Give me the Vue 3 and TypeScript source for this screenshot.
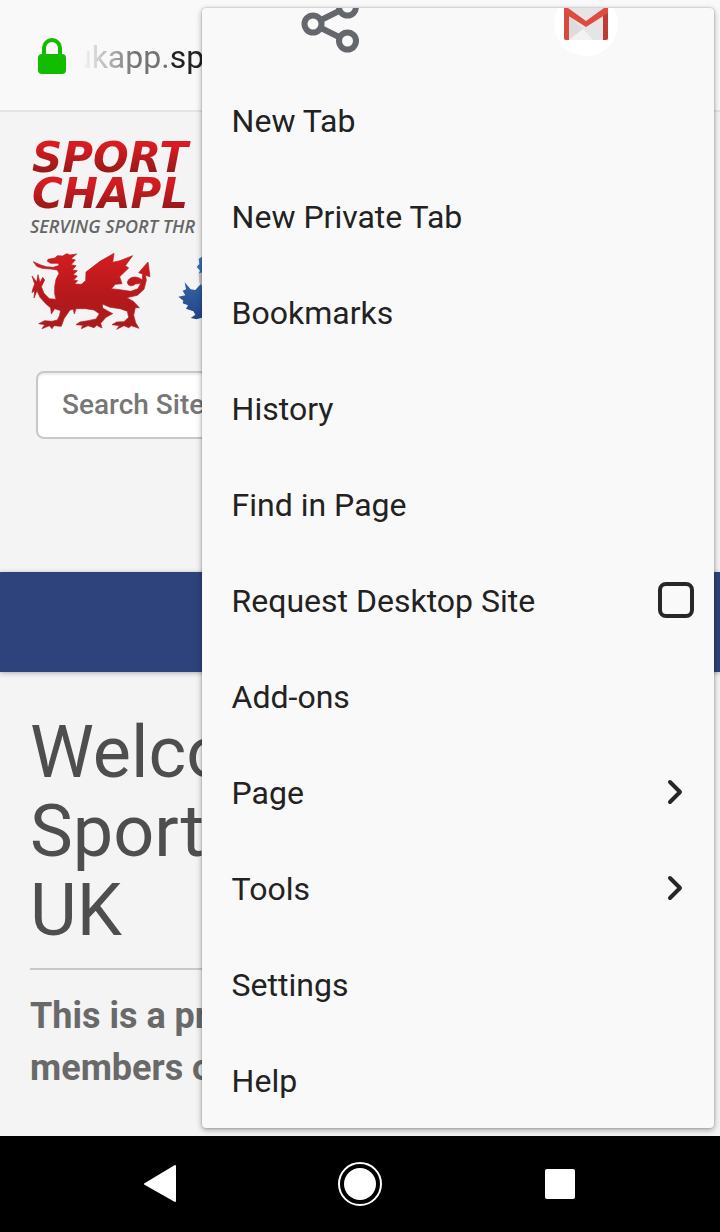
<script setup lang="ts">
import { ref } from 'vue'

interface MenuItem {
  label: string
  submenu?: boolean
  checkable?: boolean
}

const items: MenuItem[] = [
  { label: 'New Tab' },
  { label: 'New Private Tab' },
  { label: 'Bookmarks' },
  { label: 'History' },
  { label: 'Find in Page' },
  { label: 'Request Desktop Site', checkable: true },
  { label: 'Add-ons' },
  { label: 'Page', submenu: true },
  { label: 'Tools', submenu: true },
  { label: 'Settings' },
  { label: 'Help' },
]

const desktopSite = ref(false)
const query = ref('')
</script>

<template>
  <div class="screen">
    <div class="browser">
      <header class="address-bar">
        <svg class="lock" viewBox="0 0 28 36" aria-hidden="true">
          <path d="M6 18V10a8 8 0 0 1 16 0v8" fill="none" stroke="#12bc00" stroke-width="4" />
          <rect y="16" width="28" height="20" rx="4" fill="#12bc00" />
        </svg>
        <div class="url">ukapp.<span class="domain">sp</span></div>
      </header>

      <main class="page">
        <div class="brand">
          <div class="wordmark"><span>SPORT</span><span>CHAPL</span></div>
          <div class="tagline">SERVING SPORT THR</div>
          <svg class="emblems" viewBox="30 30 540 246" aria-hidden="true">
            <defs>
              <linearGradient id="dragonRed" x1="0" y1="0" x2="0" y2="1">
                <stop offset="0" stop-color="#d41c20" />
                <stop offset="0.6" stop-color="#b3191b" />
                <stop offset="1" stop-color="#a81c1c" />
              </linearGradient>
              <linearGradient id="thistleBlue" x1="0" y1="0" x2="0" y2="1">
                <stop offset="0" stop-color="#3d7ab8" />
                <stop offset="1" stop-color="#24458a" />
              </linearGradient>
            </defs>
            <path
              fill="url(#dragonRed)"
              stroke="#b81a1c"
              stroke-width="2"
              stroke-linejoin="round"
              d="M170 42 L150 45 L140 41 L128 48 L112 47 L105 54 L84 58 L82 64 L92 70 L114 70 L118 76 L100 82 L78 80 L60 74 L40 65 L50 79 L66 85 L92 87 L112 90 L117 100 L108 118 L104 140 L104 162 L108 178 L88 176 L72 160 L64 140 L74 120 L68 112 L60 128 L54 104 L50 126 L36 108 L44 132 L38 148 L36 158 L44 152 L42 174 L51 152 L60 172 L76 190 L92 204 L94 222 L104 206 L122 212 L118 228 L112 240 L96 244 L74 242 L56 251 L74 254 L66 266 L88 257 L96 266 L102 257 L124 259 L132 236 L150 210 L160 208 L163 222 L168 206 L196 206 L222 210 L238 221 L228 237 L204 242 L180 246 L168 254 L188 256 L184 266 L204 257 L222 263 L230 256 L246 264 L242 250 L258 232 L278 221 L262 212 L248 204 L247 192 L270 202 L300 206 L322 214 L326 232 L312 245 L290 246 L276 254 L298 257 L290 268 L312 257 L326 263 L334 257 L357 265 L347 248 L341 226 L346 203 L358 203 L340 184 L320 173 L352 166 L372 148 L379 120 L376 106 L390 110 L384 66 L356 98 L368 102 L367 120 C350 106 328 109 322 126 C323 141 339 139 346 132 L362 130 L354 146 L332 154 L300 149 L274 146 L286 133 L306 131 L299 110 L326 84 L316 77 L338 47 L300 62 L278 67 L282 40 L240 64 L198 96 L197 122 L184 133 L164 132 L173 122 L161 120 L172 108 L159 104 L172 92 L157 90 L168 77 L153 74 L166 60 L153 56 Z"
            />
            <path
              fill="url(#thistleBlue)"
              d="M570 44 L546 50 L536 56 L538 72 L530 80 L540 92 L536 100 L552 116 L540 134 L526 150 L512 148 L494 127 L498 148 L488 152 L496 166 L475 170 L490 182 L488 190 L504 196 L498 206 L520 214 L526 224 L512 234 L530 238 L570 226 Z"
            />
            <path fill="#c4c4c4" d="M536 100 L570 92 V140 L552 144 L538 128 Z" />
          </svg>
        </div>

        <form class="search" @submit.prevent>
          <input v-model="query" type="search" placeholder="Search Site" aria-label="Search Site" />
        </form>

        <div class="band"></div>

        <article class="content">
          <h1>Welco<br />Sport<br />UK</h1>
          <hr />
          <p>This is a pr<br />members o</p>
        </article>
      </main>

      <nav class="menu" aria-label="Browser menu">
        <div class="quick">
          <button type="button" aria-label="Share">
            <svg class="share" viewBox="0 0 58 58" fill="none" stroke="#64686d" aria-hidden="true">
              <path d="M12 29 46 12M12 29 46 46" stroke-width="6" />
              <g fill="#f9f9f9" stroke-width="6">
                <circle cx="12" cy="29" r="8.500" />
                <circle cx="46.500" cy="12" r="8.500" />
                <circle cx="46.500" cy="46" r="8.500" />
              </g>
            </svg>
          </button>
          <button type="button" aria-label="Gmail">
            <svg class="gmail" viewBox="0 0 64 64" aria-hidden="true">
              <circle cx="32" cy="32" r="32" fill="#fff" />
              <path d="M10 16h44v32H10z" fill="#e5e5e5" />
              <path d="M29 37 15 48V25z" fill="#dcdcdc" />
              <path d="M29 37 15 48h24z" fill="#f2f2f2" />
              <path d="M10 16v30a2 2 0 0 0 2 2h3V18z" fill="#d64a3f" />
              <path d="M54 16v30a2 2 0 0 1-2 2h-3V18z" fill="#bf3a30" />
              <path d="M10 19v-2q1-3 4-1l18 13 18-13q3-2 4 1v4L32 35 10 21z" fill="#df4b3f" />
            </svg>
          </button>
        </div>
        <ul>
          <li v-for="item in items" :key="item.label">
            <label v-if="item.checkable" class="entry">
              <span>{{ item.label }}</span>
              <input v-model="desktopSite" type="checkbox" />
            </label>
            <button v-else type="button" class="entry">
              <span>{{ item.label }}</span>
              <svg v-if="item.submenu" class="chevron" viewBox="0 0 16 26" aria-hidden="true">
                <path d="M3 3 13 13 3 23" fill="none" stroke="#272727" stroke-width="4" stroke-linecap="round" stroke-linejoin="round" />
              </svg>
            </button>
          </li>
        </ul>
      </nav>
    </div>

    <footer class="system-nav">
      <button type="button" aria-label="Back">
        <svg viewBox="0 0 48 48" aria-hidden="true">
          <path d="M39 6v35L9 24z" fill="#fff" stroke="#fff" stroke-width="2" stroke-linejoin="round" />
        </svg>
      </button>
      <button type="button" aria-label="Home">
        <svg viewBox="0 0 48 48" aria-hidden="true">
          <circle cx="24" cy="24" r="21" fill="none" stroke="#fff" stroke-width="2" />
          <circle cx="24" cy="24" r="16" fill="#fff" />
        </svg>
      </button>
      <button type="button" aria-label="Recent apps">
        <svg viewBox="0 0 48 48" aria-hidden="true">
          <rect x="9" y="9" width="30" height="30" rx="2" fill="#fff" />
        </svg>
      </button>
    </footer>
  </div>
</template>

<style>
body {
  margin: 0;
}
</style>

<style scoped>
.screen {
  display: flex;
  flex-direction: column;
  min-height: 100vh;
  font-family: Roboto, "Liberation Sans", sans-serif;
  color: #222;
  background: #f4f4f4;
}

button {
  padding: 0;
  border: 0;
  background: none;
  font: inherit;
  color: inherit;
}

svg {
  display: block;
}

.browser {
  position: relative;
  flex: 1;
  overflow: hidden;
}

.address-bar {
  display: flex;
  align-items: center;
  gap: 8px;
  height: 110px;
  padding: 0 38px;
  border-bottom: 2px solid #e4e4e4;
  background: #f9f9f9;
}

.lock {
  width: 28px;
  height: 36px;
  padding-top: 2px;
}

.url {
  padding-top: 4px;
  font-size: 32px;
  line-height: 40px;
  color: #737373;
  mask-image: linear-gradient(to right, transparent 8px, #000 60px);
}

.domain {
  color: #222;
}

.brand {
  padding: 28px 30px 0;
}

.wordmark {
  display: flex;
  flex-direction: column;
  font-family: "DejaVu Sans", sans-serif;
  font-size: 42px;
  font-weight: 700;
  font-style: italic;
  line-height: 36px;
}

.wordmark span {
  align-self: flex-start;
  padding: 0 8px 0 2px;
  color: transparent;
  background: linear-gradient(#d81c22 15%, #981919 90%);
  background-clip: text;
}

.tagline {
  font-family: "Open Sans", sans-serif;
  font-size: 18px;
  font-style: italic;
  font-weight: 600;
  line-height: 28px;
  color: #666;
  white-space: nowrap;
}

.emblems {
  width: 180px;
  height: 82px;
  margin-top: 10px;
}

.search {
  padding: 39px 36px 0;
}

.search input {
  display: block;
  box-sizing: border-box;
  width: 100%;
  height: 68px;
  padding: 0 24px 2px;
  border: 2px solid #c8c8c8;
  border-radius: 8px;
  background: #fff;
  box-shadow: inset 0 2px 2px #eee;
  font: 500 28px/40px Roboto, sans-serif;
  color: #555;
  appearance: none;
}

.search input::placeholder {
  color: #777;
  opacity: 1;
}

.band {
  height: 100px;
  margin-top: 133px;
  background: #2e437c;
  box-shadow: 0 1px 5px #aaa;
}

.content {
  padding: 41px 30px 42px;
}

h1 {
  margin: 0;
  font-size: 72px;
  font-weight: 400;
  line-height: 79px;
  color: #4e4e4e;
}

hr {
  margin: 18px 0 20px;
  border: 0;
  border-top: 2px solid #c8c8c8;
}

p {
  margin: 0;
  font-size: 36px;
  font-weight: 700;
  line-height: 52px;
  color: #696969;
}

.menu {
  position: absolute;
  top: 8px;
  right: 6px;
  bottom: 8px;
  left: 28%;
  overflow: hidden;
  border-radius: 4px;
  background: #f9f9f9;
}

.browser::after {
  content: "";
  position: absolute;
  top: 8px;
  right: 6px;
  bottom: 8px;
  left: 28%;
  border-radius: 4px;
  box-shadow: 0 2px 6px #0005, 0 0 2px #0004;
  pointer-events: none;
}

.quick {
  display: grid;
  grid-template-columns: 1fr 1fr;
  grid-template-rows: 64px;
  align-items: end;
}

.quick button {
  display: flex;
  align-items: center;
  justify-content: center;
  height: 96px;
}

.share {
  width: 58px;
  height: 58px;
}

.gmail {
  width: 64px;
  height: 64px;
}

ul {
  margin: 0;
  padding: 0;
  list-style: none;
}

.entry {
  display: flex;
  align-items: center;
  justify-content: space-between;
  box-sizing: border-box;
  width: 100%;
  height: 96px;
  padding: 0 20px 0 30px;
  font-size: 32px;
  line-height: 40px;
  text-align: left;
}

.entry span {
  padding-top: 2px;
}

.entry input {
  appearance: none;
  box-sizing: border-box;
  width: 36px;
  height: 36px;
  margin: 0;
  border: 4px solid #272727;
  border-radius: 8px;
}

.entry input:checked {
  background: #272727;
}

.chevron {
  width: 16px;
  height: 26px;
  margin-right: 11px;
}

.system-nav {
  display: grid;
  grid-template-columns: repeat(3, 1fr);
  align-items: center;
  height: 96px;
  padding: 0 60px;
  background: #000;
}

.system-nav button {
  display: flex;
  justify-content: center;
}

.system-nav svg {
  width: 48px;
  height: 48px;
}
</style>
